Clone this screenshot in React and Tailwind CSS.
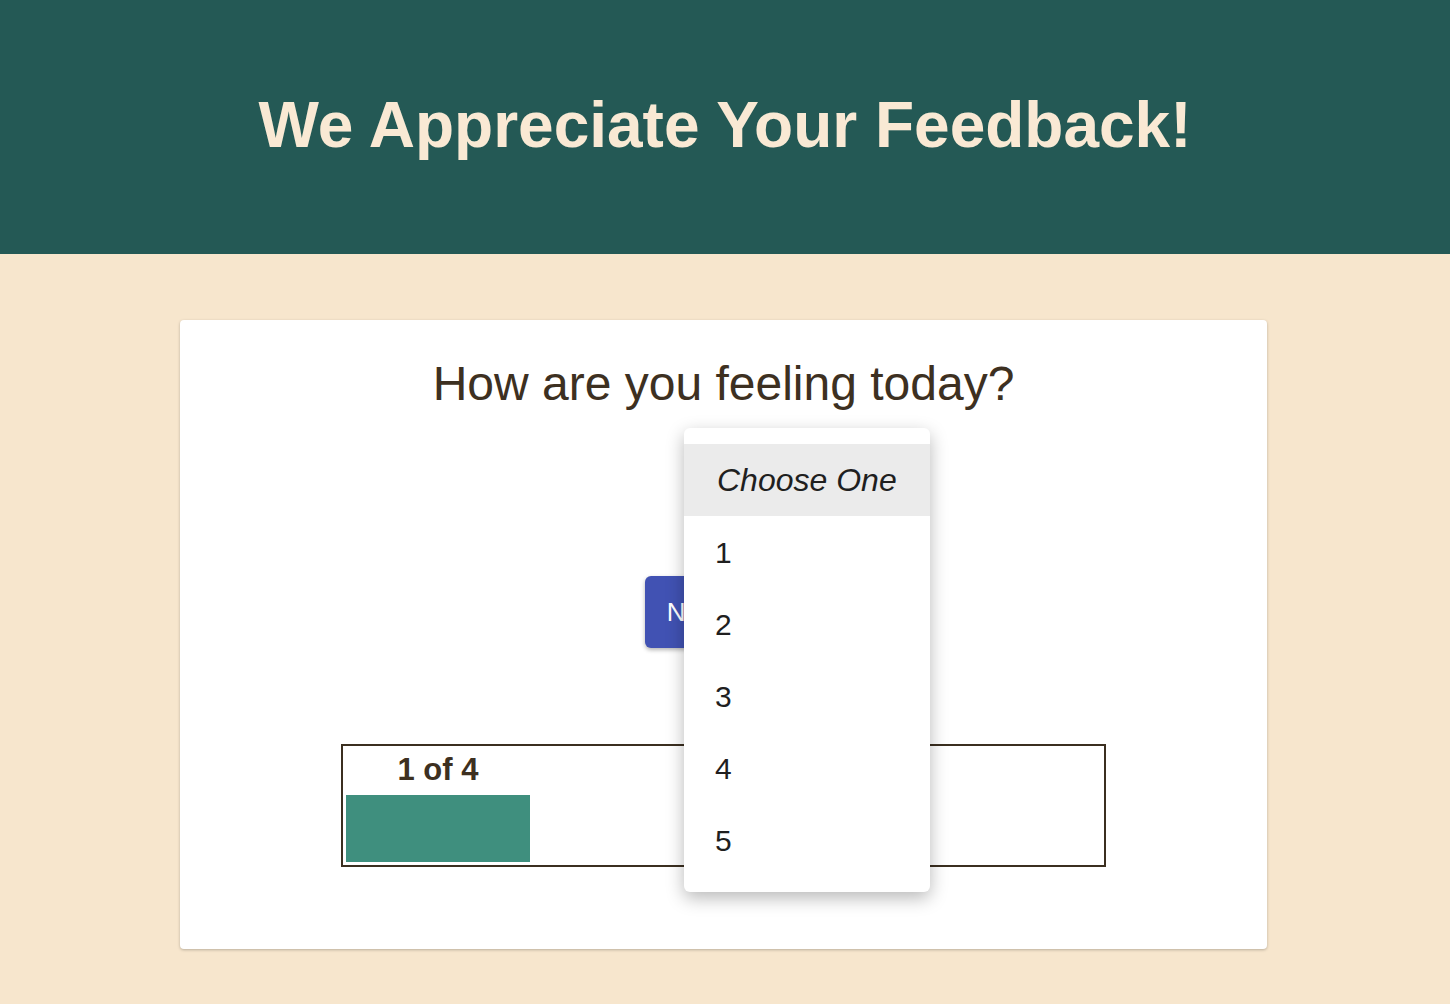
import React from "react";

const options = ["1", "2", "3", "4", "5"];

function Dropdown() {
  return (
    <div className="absolute left-[504px] top-[108px] w-[246px] rounded-md bg-white py-4 shadow-[0_6px_18px_rgba(0,0,0,0.28)]">
      <div className="flex h-[72px] items-center bg-[#ebebeb] pl-[33px] text-[32px] italic text-[#1f1f1f]">
        Choose One
      </div>
      {options.map((o) => (
        <div key={o} className="flex h-[72px] items-center pl-[31px] text-[30px] text-[#1f1f1f]">
          {o}
        </div>
      ))}
    </div>
  );
}

export default function App() {
  return (
    <div className="min-h-[1004px] bg-[#f7e6cd] font-['Liberation_Sans',Arial,sans-serif]">
      <header className="flex h-[254px] items-center justify-center bg-[#245955] pb-[4px]">
        <h1 className="text-[64px] font-bold text-[#f9e9d4]">We Appreciate Your Feedback!</h1>
      </header>
      <main className="flex justify-center pt-[66px] pr-[3px]">
        <div className="relative flex h-[629px] w-[1087px] flex-col items-center rounded-[4px] bg-white pt-[34px] shadow-[0_1px_3px_rgba(0,0,0,0.25)]">
          <h2 className="text-[48px] leading-[60px] text-[#3d3021]">How are you feeling today?</h2>
          <div className="mt-[162px] flex h-[72px] w-[158px] items-center justify-center rounded-md bg-[#4152b3] pr-[60px] text-[26px] text-white shadow-[0_2px_4px_rgba(0,0,0,0.3)]">
            Next
          </div>
          <div className="mt-[96px] flex h-[123px] w-[765px] flex-col self-start ml-[161px] border-2 border-[#3b2f20] p-[3px]">
            <div className="w-[184px] text-center text-[31px] font-bold leading-[42px] text-[#3d3021]">1 of 4</div>
            <div className="mt-[4px] h-[67px] w-[184px] bg-[#3f8f7e]" />
          </div>
          <Dropdown />
        </div>
      </main>
    </div>
  );
}
